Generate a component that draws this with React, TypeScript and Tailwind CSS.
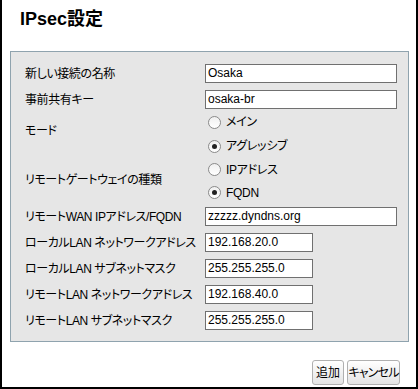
import React from "react";

const font = { fontFamily: '"Liberation Sans", Arial, "Noto Sans CJK JP", sans-serif' };

function Label({ children, className = "" }: { children: React.ReactNode; className?: string }) {
  return (
    <div className={"w-[180px] shrink-0 whitespace-nowrap text-[12px] tracking-[-0.4px] text-black leading-none [font-feature-settings:'palt'] " + className}>
      {children}
    </div>
  );
}

function TextBox({ value, wide }: { value: string; wide?: boolean }) {
  return (
    <div
      className={
        "h-[19px] border border-[#707070] bg-white text-[12px] leading-[17px] pl-[2px] text-black " +
        (wide ? "w-[192px]" : "w-[108px]")
      }
    >
      {value}
    </div>
  );
}

function Radio({ label, checked, h }: { label: string; checked?: boolean; h: string }) {
  return (
    <div className={"flex items-center " + h}>
      <span className="ml-[3px] w-[13px] h-[13px] rounded-full border border-[#8a8a8a] bg-gradient-to-b from-[#f0f0f0] to-white flex items-center justify-center">
        {checked && <span className="w-[5px] h-[5px] rounded-full bg-[#222]" />}
      </span>
      <span className="ml-[5px] text-[12px] leading-none text-black tracking-[-0.3px] [font-feature-settings:'palt']">{label}</span>
    </div>
  );
}

export default function App() {
  return (
    <div
      className="w-[418px] h-[389px] bg-white border-l-2 border-r-2 border-b-2 border-black box-border"
      style={font}
    >
      <div className="pt-[7px] pl-[18px] h-[31px] text-[18px] leading-[24px] font-bold text-black">IPsec設定</div>
      <div className="mt-[20px] ml-[8px] w-[399px] border border-[#8fa3ae] bg-[#e6e6e6] pt-[12px] pb-[11px] pl-[14px]">
        <div className="flex items-center h-[19px]">
          <Label>新しい接続の名称</Label>
          <TextBox value="Osaka" wide />
        </div>
        <div className="flex items-center h-[19px] mt-[7px]">
          <Label>事前共有キー</Label>
          <TextBox value="osaka-br" wide />
        </div>
        <div className="flex items-center mt-[1px]">
          <Label className="-mt-[6px]">モード</Label>
          <div className="flex flex-col">
            <Radio label="メイン" h="h-[24px]" />
            <Radio label="アグレッシブ" checked h="h-[24px]" />
          </div>
        </div>
        <div className="flex items-center">
          <Label className="-mt-[3px]">リモートゲートウェイの種類</Label>
          <div className="flex flex-col">
            <Radio label="IPアドレス" h="h-[23px]" />
            <Radio label="FQDN" checked h="h-[23px]" />
          </div>
        </div>
        <div className="flex items-center h-[19px] mt-[3px]">
          <Label>リモートWAN IPアドレス/FQDN</Label>
          <TextBox value="zzzzz.dyndns.org" wide />
        </div>
        <div className="flex items-center h-[19px] mt-[7px]">
          <Label>ローカルLAN ネットワークアドレス</Label>
          <TextBox value="192.168.20.0" />
        </div>
        <div className="flex items-center h-[19px] mt-[7px]">
          <Label>ローカルLAN サブネットマスク</Label>
          <TextBox value="255.255.255.0" />
        </div>
        <div className="flex items-center h-[19px] mt-[7px]">
          <Label>リモートLAN ネットワークアドレス</Label>
          <TextBox value="192.168.40.0" />
        </div>
        <div className="flex items-center h-[19px] mt-[7px]">
          <Label>リモートLAN サブネットマスク</Label>
          <TextBox value="255.255.255.0" />
        </div>
      </div>
      <div className="flex justify-end gap-[3px] mt-[18px] pr-[16px]">
        <button className="h-[25px] w-[32px] flex items-center justify-center whitespace-nowrap rounded-[3px] border border-[#b0b0b0] bg-gradient-to-b from-white to-[#e4e4e4] text-[12px] text-black leading-none [font-feature-settings:'palt']">
          追加
        </button>
        <button className="h-[25px] w-[53px] px-0 flex items-center justify-center whitespace-nowrap rounded-[3px] border border-[#b0b0b0] bg-gradient-to-b from-white to-[#e4e4e4] text-[12px] text-black leading-none tracking-[-0.8px] [font-feature-settings:'palt']">
          キャンセル
        </button>
      </div>
    </div>
  );
}
